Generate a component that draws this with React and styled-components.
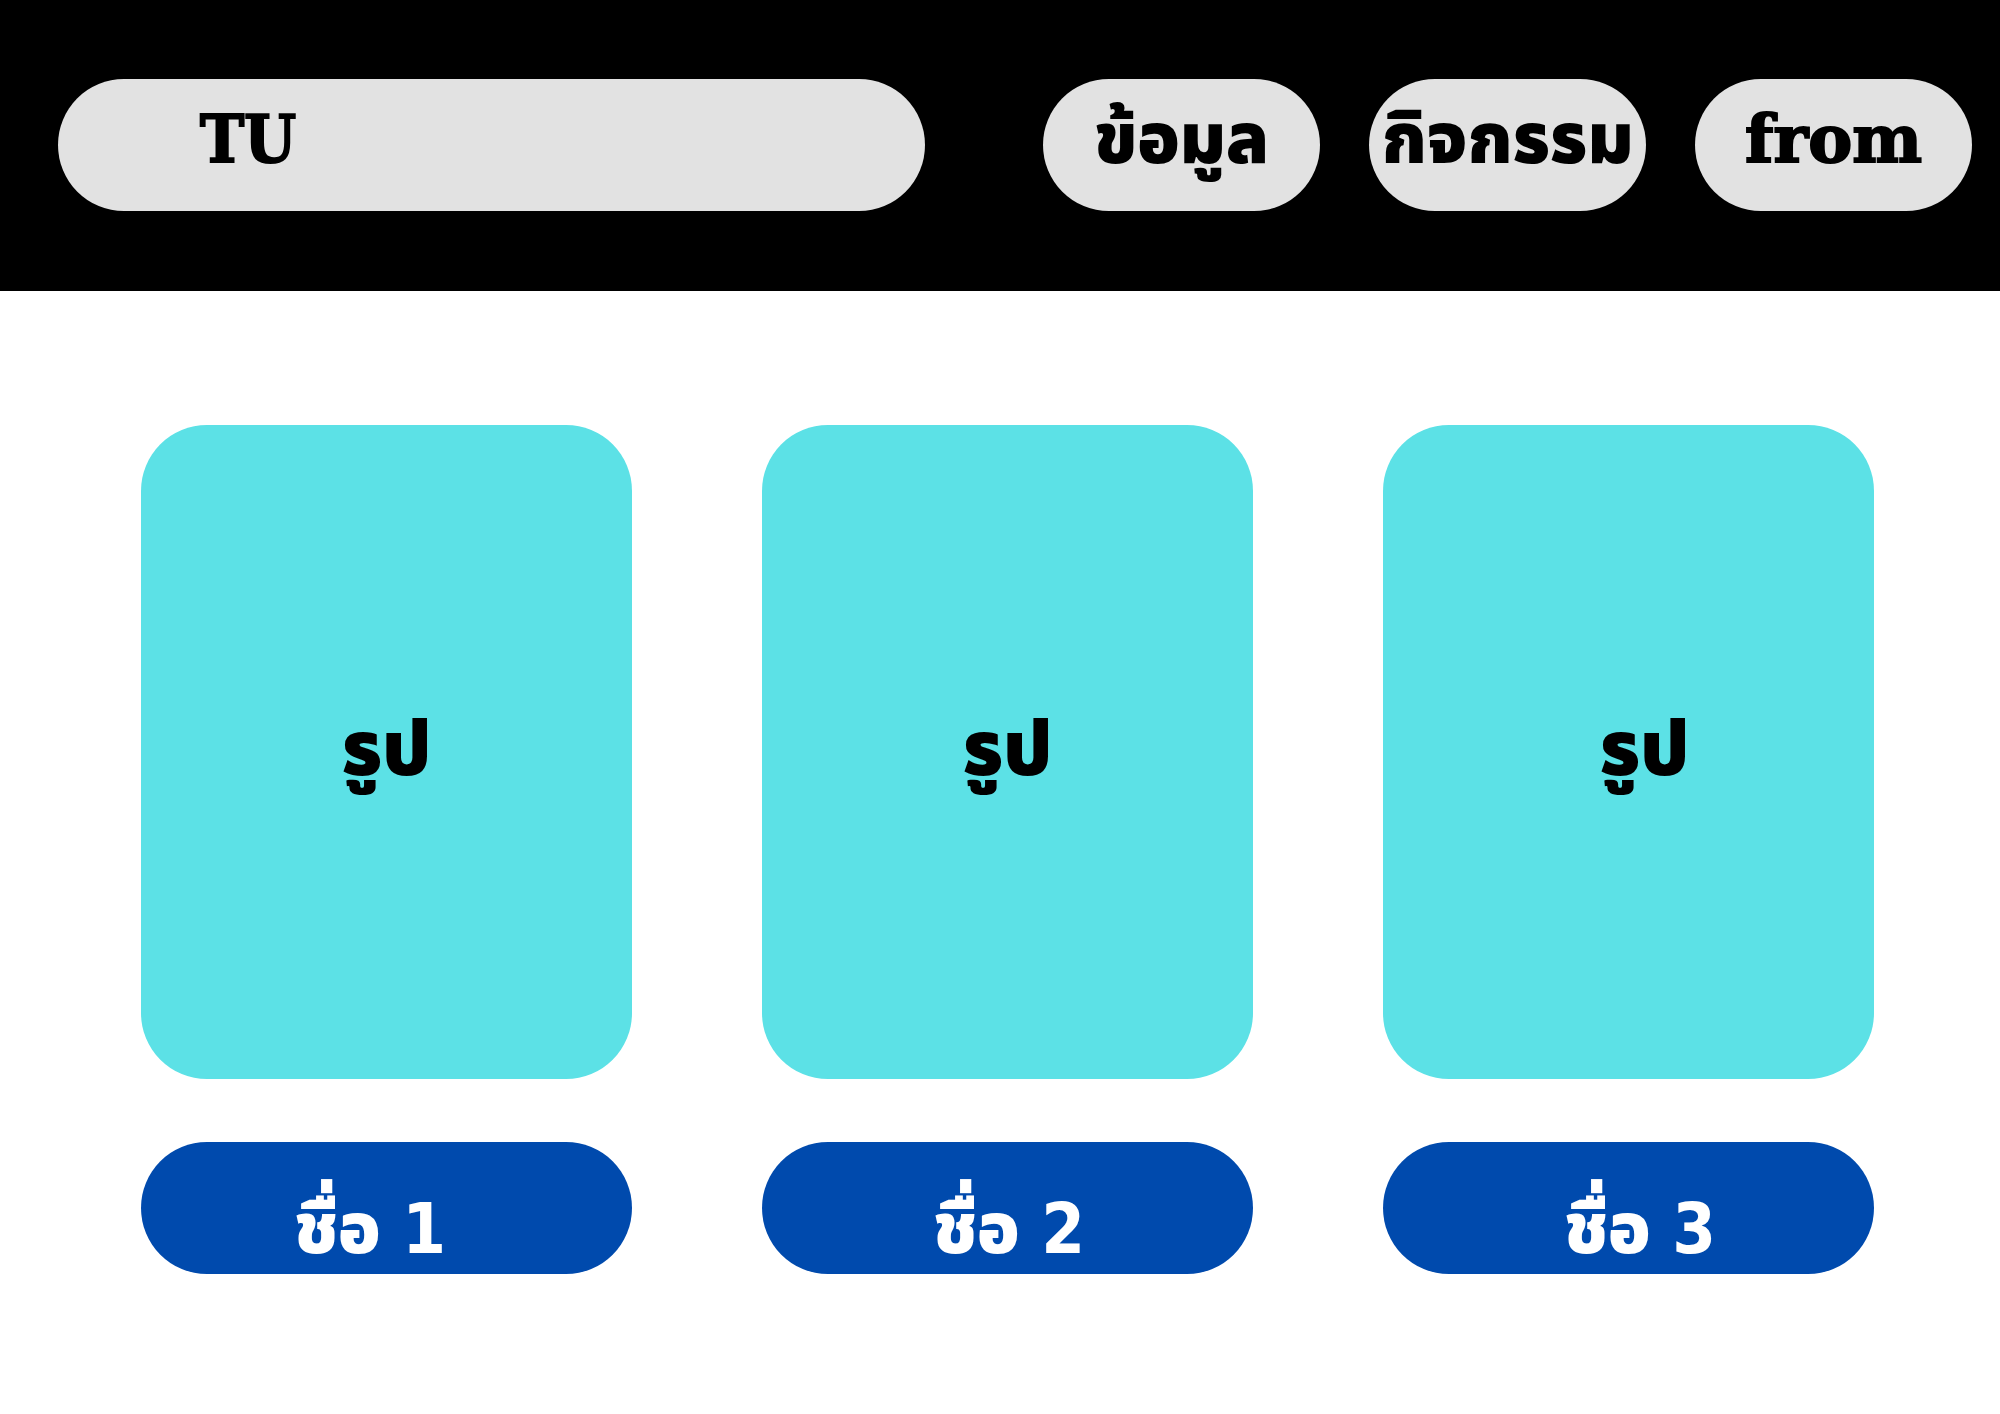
import React from "react";
import styled, { createGlobalStyle } from "styled-components";

const GlobalStyle = createGlobalStyle`
  *, *::before, *::after { box-sizing: border-box; }
  body {
    margin: 0;
    background: #ffffff;
    color: #000000;
    font-family: "DejaVu Serif", "Noto Sans Thai", serif;
    font-size: 66px;
    font-weight: 900;
    line-height: 80px;
  }
`;

const Header = styled.header`
  display: flex;
  align-items: flex-start;
  gap: 118px;
  padding: 79px 28px 80px 58px;
  background: #000000;
`;

const Pill = styled.a`
  display: flex;
  align-items: flex-start;
  height: 132px;
  padding-top: 20px;
  border-radius: 66px;
  background: #e2e2e2;
  color: inherit;
  text-decoration: none;
  white-space: nowrap;

  &:lang(en) {
    -webkit-text-stroke: 2px currentColor;
  }

  &:lang(th) {
    font-size: 70px;
  }
`;

const Brand = styled(Pill)`
  flex: 1;
  padding-left: 142px;
  font-family: "DejaVu Serif Condensed", "DejaVu Serif", serif;
`;

const Nav = styled.nav`
  display: flex;
  gap: 49px;
`;

const NavLink = styled(Pill)`
  width: 277px;
  justify-content: center;
`;

const Gallery = styled.main`
  display: grid;
  grid-template-columns: repeat(3, minmax(0, 1fr));
  gap: 130px;
  padding: 134px 126px 141px 141px;
`;

const Card = styled.article`
  display: flex;
  flex-direction: column;
  gap: 63px;
`;

const Picture = styled.div`
  display: flex;
  align-items: center;
  justify-content: center;
  height: 654px;
  padding: 0 0 6px ${({ $inset }) => $inset}px;
  border-radius: 66px;
  background: #5ce1e6;
  font-size: 76px;
`;

const CardName = styled.button`
  height: 132px;
  padding: 42px 0 0 ${({ $indent }) => $indent}px;
  border: 0;
  border-radius: 66px;
  background: #004aad;
  color: #ffffff;
  font: inherit;
  font-family: "DejaVu Sans Condensed", "DejaVu Sans", "Noto Sans Thai", sans-serif;
  font-size: 70px;
  text-align: left;
  white-space: nowrap;
`;

const links = [
  { label: "ข้อมูล", lang: "th" },
  { label: "กิจกรรม", lang: "th" },
  { label: "from", lang: "en" },
];

const cards = [
  { name: "ชื่อ 1", indent: 153, inset: 0 },
  { name: "ชื่อ 2", indent: 171, inset: 0 },
  { name: "ชื่อ 3", indent: 181, inset: 32 },
];

export default function App() {
  return (
    <>
      <GlobalStyle />
      <Header>
        <Brand href="#" lang="en">TU</Brand>
        <Nav>
          {links.map(({ label, lang }) => (
            <NavLink key={label} href="#" lang={lang}>{label}</NavLink>
          ))}
        </Nav>
      </Header>
      <Gallery lang="th">
        {cards.map(({ name, indent, inset }) => (
          <Card key={name}>
            <Picture $inset={inset}>รูป</Picture>
            <CardName type="button" $indent={indent}>{name}</CardName>
          </Card>
        ))}
      </Gallery>
    </>
  );
}
